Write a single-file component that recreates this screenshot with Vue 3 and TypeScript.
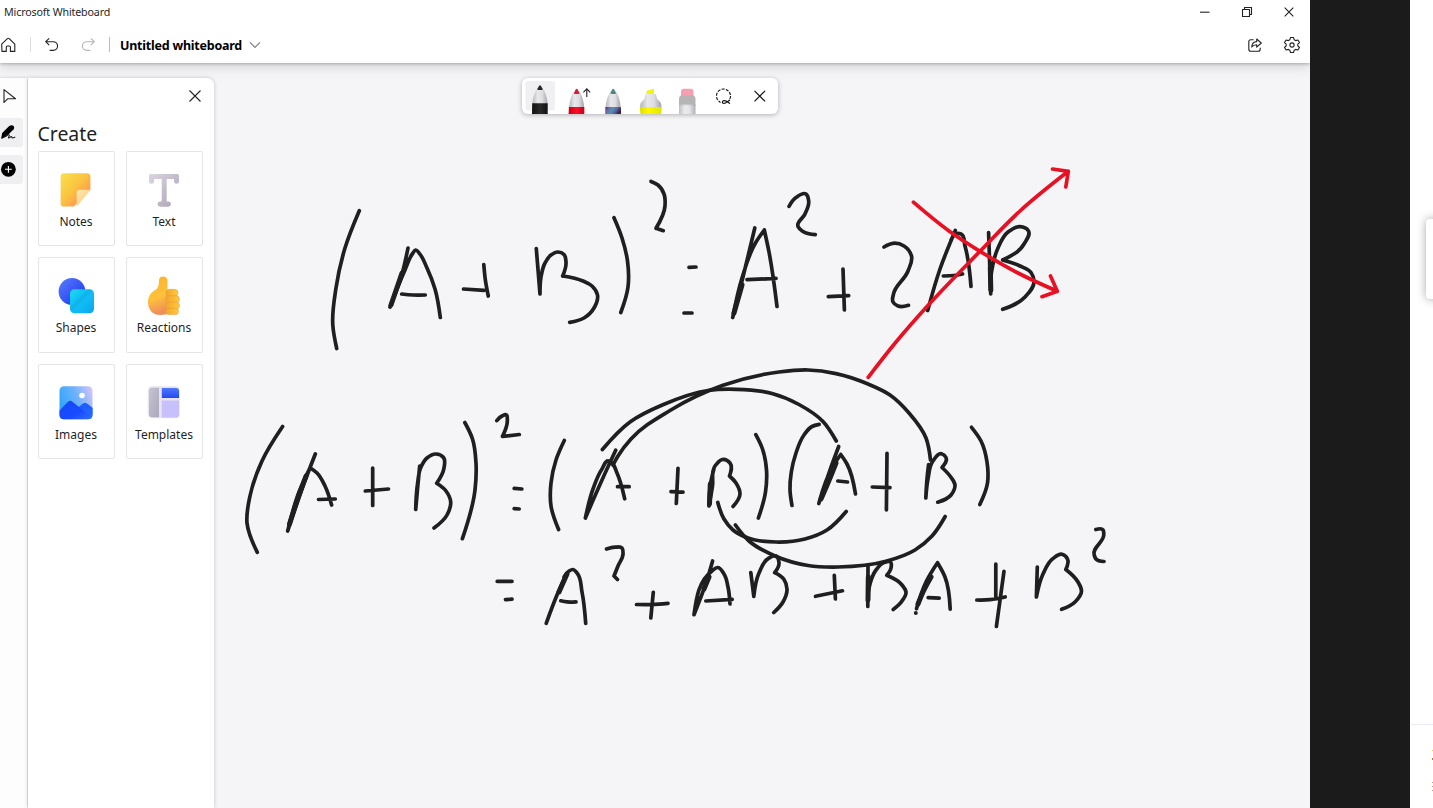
<script setup lang="ts">
interface Card {
  id: string
  label: string
}

const cards: Card[] = [
  { id: 'notes', label: 'Notes' },
  { id: 'text', label: 'Text' },
  { id: 'shapes', label: 'Shapes' },
  { id: 'reactions', label: 'Reactions' },
  { id: 'images', label: 'Images' },
  { id: 'templates', label: 'Templates' },
]

type Point = [number, number]

const distance = (p: Point, q: Point): number => Math.hypot(q[0] - p[0], q[1] - p[1]) || 1

// Unit tangent at b of the circle-like arc running a -> b -> c.
function tangent(a: Point, b: Point, c: Point): Point {
  const before = distance(a, b)
  const after = distance(b, c)
  const x = ((b[0] - a[0]) / before) * after + ((c[0] - b[0]) / after) * before
  const y = ((b[1] - a[1]) / before) * after + ((c[1] - b[1]) / after) * before
  const len = Math.hypot(x, y) || 1
  return [x / len, y / len]
}

function segmentPath(pts: Point[]): string {
  const last = pts.length - 1
  let d = `M${pts[0][0]} ${pts[0][1]}`
  if (last === 1) return `${d}L${pts[1][0]} ${pts[1][1]}`
  for (let i = 0; i < last; i++) {
    const b = pts[i]
    const c = pts[i + 1]
    const reach = distance(b, c) * 0.35
    let h1: Point = b
    let h2: Point = c
    if (i > 0) {
      const t = tangent(pts[i - 1], b, c)
      h1 = [b[0] + t[0] * reach, b[1] + t[1] * reach]
    }
    if (i + 1 < last) {
      const t = tangent(b, c, pts[i + 2])
      h2 = [c[0] - t[0] * reach, c[1] - t[1] * reach]
    }
    if (i === 0) h1 = [(b[0] + h2[0]) / 2, (b[1] + h2[1]) / 2]
    if (i + 1 === last) h2 = [(c[0] + h1[0]) / 2, (c[1] + h1[1]) / 2]
    d += `C${h1[0]} ${h1[1]} ${h2[0]} ${h2[1]} ${c[0]} ${c[1]}`
  }
  return d
}

// Smooth curve through the points; "|" separates segments that meet at a corner.
function toPath(source: string): string {
  return source
    .split('|')
    .map((segment) => segmentPath(segment.trim().split(/\s+/).map((p) => p.split(',').map(Number) as Point)))
    .join('')
}

const ink: string[] = [
  // first line
  '359.3,210.7 345,248 336,288 332.8,325 336.7,348.5',
  '408,248 402,274 390,307 | 390,307 405,270 413,253 415.7,250 419,253 427,268 435,289 440.3,317.5 | 401.7,294 413,295 425.3,295',
  '463.5,289 484,290.3 | 483.8,264.7 485.5,281 488.3,296',
  '536.3,248.7 540,294 | 540,294 541,277 545,263 551,255 558,252 564,254.5 566,262 562.7,276 | 562.7,276 583,281 592,286 597.5,295 594,308 584,318 569.7,322.3',
  '614,217.7 622,238 627.5,261 628,287 620.8,312.5',
  '651,181.5 658,185 664,194 665,206 656,228.3 | 656,228.3 663.3,230.7',
  '689,267.4 696,267 | 684,313 692,313',
  '754.8,228 743,277 732.7,317.5 | 732.7,317.5 742,278 756,242 764.3,230 | 764.3,230 769,252 777,306.5 | 747,279.7 776,278.4',
  '789,206.3 796,197.5 806,194 808.7,201 805,214 798,226.5 803,231.5 815.3,234.6',
  '828.3,296.6 848.7,295.7 | 843,269 844.4,310',
  '884,247 893,243.3 904,246 911.5,256 908,271 893.5,294 893,302 898,306 908.5,305.3',
  '955.3,230.5 940,269 927.7,310.5 | 951,240 957,233.5 961,234 965,246 971,286.5 | 943.3,276 954,275.5 962.5,274',
  '988.6,232.5 990.7,294 | 990.7,294 991.5,272 998,248 1008,232 1020,226.7 1028.2,230.5 1024,244 1002.7,260 | 1002.7,260 1020,266 1031,272.5 1034,281 1025,297 1002.7,309.3',
  // second line
  '282.6,426.5 262,461 250,496 247,523 257.3,552.3',
  '315.3,454 302,489 287.7,531 | 287.7,531 299,492 310,467.7 | 310,467.7 317,473 325,486 331.6,505 | 318.5,499.5 335.3,499',
  '365.3,491 388.5,489 | 372.7,468 372.7,505.5',
  '419.7,466 417.5,489 415.7,509.5 | 415.7,509.5 417.5,484 421,467 427,458 436,454 443.5,457.5 444,468 436.7,483.3 | 436.7,483.3 446,491 450.7,502 447,515 434,528',
  '464.8,422.5 472.5,439 476,463 475,490 462.4,538.7',
  '496.8,420.6 502,416 506.5,415 507.3,419 502.5,436.4 | 502.5,436.4 519.3,434.5',
  '514.2,488.3 521.8,489 | 514.2,508.7 519.2,509',
  '564.3,440.5 556,460 551,483 551,506 558.6,529.5',
  '615.7,450.3 602,480 585.4,518 | 585.4,518 593,489 602,469 608.5,461 611.5,462.5 617,473 624.7,498.8 | 617.5,486.7 629.2,486.7',
  '671,491.7 683,492.2 | 678,468.3 676.3,503.5',
  '714,468.5 710.5,484 709,506 | 709,506 712.5,486 715,466 723.5,459.3 730,463 729.5,476 | 729.5,476 736,483 740,494 733,506.5',
  '755.8,434.7 762.5,449 766.5,470 765.5,492 758.4,518',
  '819.2,424.4 812,426.5 804,435 796,453 791.3,472 790,490 792,505.5',
  '838.7,446.5 830,470 818.8,503.5 | 818.8,503.5 833,466 840.8,454.5 | 840.8,454.5 847,464 855.5,494 | 837.8,481 847.5,482',
  '872.3,487 890,487.7 | 887,453.3 886.4,510',
  '928.6,464.5 927,479 925.8,498 | 925.8,498 928,479 933,461 941.5,453.8 946,457.5 942,467.5 | 942,467.5 950,476 955,485 951,495 937.7,502.2',
  '971.5,427.3 981,441 987,462 987.5,483 979.8,504.5',
  // connecting arcs
  '602.4,449.5 630,422 663.5,404.5 708,390.5 736,389.3 772,393.5 799,404.5 823,421.5 836.3,441',
  '613,465 618,456 631,439 670,410.5 723,385.3 779,372 808,370 836,373.6 868,384 890,395 909,413 926,438 930.5,460',
  '717.8,502.5 724,519 733,530 748,538 776,542 805,539 827,530 846.2,511.5',
  '735.4,525 749,541 775,556 808,565.5 838,567 886,561.3 915,550 932,536 945.2,516.5',
  // third line
  '497.2,581.3 512,581.3 | 505.5,599.7 512,599.2',
  '566.5,573.5 557,595 546.2,623.3 | 564,577 569,571 573,569.5 577,573 582,592 585.7,623.3 | 560.8,600.8 567,601.9 576,601.8',
  '606.5,549 615,547.2 622,548 623,554 618,566 614,576 | 614,576 617.5,579.5',
  '636.5,604.5 652,604.5 668,603.3 | 653.3,592.3 650.8,618',
  '712.6,561 706,583 694,614.7 | 694,614.7 712,571 717.5,567.5 724,574 728,587 730,604 | 705.8,601 732.2,599.4',
  '750.8,572.5 753.8,596.3 | 753.8,596.3 759,573 769,558 776,556 779,562.5 774.7,572.7 | 774.7,572.7 784,579.5 787,589 783,602 773.8,612.5',
  '815.5,596.3 842.5,590.8 | 834.3,575.3 835.4,599',
  '868,565 867.8,606.5 | 867.8,606.5 869,588 876,570 884,562.5 890.5,562 891,568 886.8,575.3 | 886.8,575.3 902,585 906,592 902,601 893.2,609.5',
  '916.5,608.7 926,582 937.5,562.8 | 937.5,562.8 945,577 950.2,609.2 | 928.2,597.7 939.2,598.2',
  '976.8,600 990,599.7 1005.2,597 | 995.8,564 995.8,596.5 | 1004,571.3 996.4,626.5',
  '1037.3,567 1036.4,597 | 1036.4,597 1043,574 1053,558.5 1062,554.3 1067.5,559 1065.8,569.5 | 1065.8,569.5 1078,582 1081.5,591 1075,602 1061.6,609.3',
  '1095.8,529.5 1103,529.8 1103.8,534 1094.2,555 1096,559 1104,561.5',
]

const heavy: string[] = [
  '402,273 391,305',
  '742,285 734,313',
  '306,476 298,498 289.5,524',
  '567,574 559,592',
  '710.3,484 709.5,504',
  '836,463 830,478 821,499',
  '931,577 924,590 918,604',
  '709,577 704,589',
  '990.3,268 990.8,290',
  '868.3,577 868,600',
]

const crossOut: string[] = [
  '868.2,377.3 896,342 927,306.5 980,251.3 1020,211 1068.3,171.3 | 1052.5,169 1068.3,171.3 | 1068.3,171.3 1065.8,187',
  '913.4,202.2 949,231 980,251.3 1018,273 1057.3,291.3 | 1050.5,276 1057.3,291.3 | 1057.3,291.3 1042,296.7',
]
</script>

<template>
  <div class="screen">
    <main class="window">
      <header class="head">
        <div class="titlebar">
          <span class="app-name">Microsoft Whiteboard</span>
          <div class="controls">
            <svg width="12" height="12" viewBox="0 0 12 12"><path d="M1 6.2h9.5" /></svg>
            <svg width="12" height="12" viewBox="0 0 12 12"><path d="M1.5 3.5h7v7h-7zM3.5 3.3V1.5h7v7H8.7" /></svg>
            <svg width="12" height="12" viewBox="0 0 12 12"><path d="M1.7 1.7l8.6 8.6M10.3 1.7L1.7 10.3" /></svg>
          </div>
        </div>
        <div class="toolbar">
          <svg class="home" width="16" height="16" viewBox="0 0 16 16"><path d="M1.7 7.2L7.4 1.6q.9-.8 1.8 0L14.8 7.2v7.2H10.4V10q0-1-1-1H7.3q-1 0-1 1v4.4H2z" /></svg>
          <i class="bar light" />
          <svg class="undo" width="16" height="16" viewBox="0 0 16 16"><path d="M6.2 1.3L2.7 4.7l3.5 3.5M3 4.700h7.200a4.300 4.300 0 0 1 0 8.700H6.700" /></svg>
          <svg class="redo" width="16" height="16" viewBox="0 0 16 16"><path d="M10.800 1.300l3.500 3.400-3.500 3.500M14 4.700H6.800a4.300 4.300 0 0 0 0 8.700h3.500" /></svg>
          <i class="bar" />
          <strong class="doc">Untitled whiteboard</strong>
          <svg class="chev" width="12" height="8" viewBox="0 0 12 8"><path d="M1 1.3l5 5 5-5" /></svg>
          <span class="grow" />
          <svg class="share" width="16" height="16" viewBox="0 0 16 16"><path d="M6.5 2.8H3.8Q1.8 2.8 1.8 4.8v7.4q0 2 2 2h7.4q2 0 2-2V10.7M9.7 2v2.6C6.5 4.7 5 6.5 4.7 10 6 8.3 7.4 7.7 9.7 7.7v2.5L14.3 6z" /></svg>
          <svg class="gear" width="18" height="18" viewBox="0 0 18 18"><path d="M7.5 1.5h3l.6 2.2 1.6.9 2.2-.6 1.6 2.6-1.7 1.5v1.8l1.7 1.6-1.6 2.5-2.2-.6-1.6.9-.6 2.2h-3l-.6-2.2-1.6-.9-2.2.6-1.6-2.5 1.7-1.6V8.1L1.5 6.6 3.1 4l2.2.6 1.6-.9z" /><circle cx="9" cy="9" r="2.1" /></svg>
        </div>
      </header>

      <section class="board">
        <svg class="ink" viewBox="0 63 1310 745" width="1310" height="745">
          <path v-for="s in ink" :key="s" :d="toPath(s)" />
          <path v-for="s in heavy" :key="s" class="heavy" :d="toPath(s)" />
          <circle cx="915.8" cy="613" r="2" />
          <path v-for="s in crossOut" :key="s" class="red" :d="toPath(s)" />
        </svg>

        <div class="side">
          <nav class="rail">
            <span class="tool"><svg width="24" height="28" viewBox="0 0 24 28"><path class="line" d="M4 7.6v12.8l3.6-3.6H15.5z" /></svg></span>
            <span class="tool active"><svg width="24" height="28" viewBox="0 0 24 28"><path d="M1.2 20.3l1-5.2 6.5-6.5q2.2-1.9 4.2-1 2 1.2.8 3.6l-7 7.1-4.3 2.1z" /><path class="line" d="M1.3 20.2c4-1 6-3.8 7.6-3.5 1.4.5-1.4 3.2 0 3.3 1.1 0 1.4-1.5 2.3-1.4.8.2.5 1.3 1.5 1.3 1 0 1.4-.6 2.5-.8" /></svg></span>
            <span class="tool active"><svg width="24" height="28" viewBox="0 0 24 28"><circle cx="8.4" cy="14.3" r="7.4" /><path class="plus" d="M8.4 10.900v6.800M5 14.300h6.800" /></svg></span>
          </nav>

          <aside class="panel">
            <svg class="close" width="14" height="14" viewBox="0 0 14 14"><path d="M1.5 1.5l11 11M12.5 1.5l-11 11" /></svg>
            <h1>Create</h1>
            <div class="cards">
              <div v-for="card in cards" :key="card.id" class="card">
                <svg v-if="card.id === 'notes'" width="40" height="40" viewBox="0 0 40 40">
                  <defs>
                    <linearGradient id="note" x1="0" y1="0" x2="1" y2="1"><stop offset="0" stop-color="#f8e04c" /><stop offset=".45" stop-color="#fbc440" /><stop offset=".75" stop-color="#ff9a50" /></linearGradient>
                    <linearGradient id="fold" x1="0" y1="0" x2="1" y2="1"><stop offset="0" stop-color="#ffe9b5" /><stop offset="1" stop-color="#fdc66d" /></linearGradient>
                  </defs>
                  <g transform="translate(1 0)">
                    <path fill="url(#note)" d="M7 3.3h23q3.4 0 3.4 3.4V20L17 36.6H7q-3.4 0-3.4-3.4V6.7Q3.6 3.3 7 3.3z" />
                    <path fill="url(#fold)" d="M23 19.7h10.4L20 36.6h-.3V23q0-3.3 3.3-3.3z" />
                  </g>
                </svg>
                <svg v-else-if="card.id === 'text'" width="40" height="40" viewBox="0 0 40 40">
                  <defs><linearGradient id="serif" x1="0" y1="0" x2="1" y2="1"><stop offset="0" stop-color="#dad6e1" /><stop offset="1" stop-color="#ada2b5" /></linearGradient></defs>
                  <path fill="url(#serif)" d="M6.5 4H33.5q1.5 0 1.5 1.6V11.5q-.2 2.3-2.5 2.3T30 11.5V9H22.7V31.5H24.5q2.5.2 2.5 2.6T24.5 36.7H16q-2.5-.2-2.5-2.6t2.5-2.6h1.7V9H10v2.5q-.2 2.3-2.5 2.3T5 11.5V5.6Q5 4 6.5 4z" />
                </svg>
                <svg v-else-if="card.id === 'shapes'" width="40" height="40" viewBox="0 0 40 40">
                  <defs>
                    <linearGradient id="disc" x1="0" y1="0" x2="1" y2="1"><stop offset="0" stop-color="#5a7dfc" /><stop offset="1" stop-color="#1631ef" /></linearGradient>
                    <linearGradient id="tile" x1="0" y1="0" x2="1" y2="1"><stop offset="0" stop-color="#20dafa" /><stop offset=".34" stop-color="#0fc4f1" /><stop offset=".42" stop-color="#12b0e8" /><stop offset=".54" stop-color="#11bdf5" /><stop offset="1" stop-color="#0ba4ed" /></linearGradient>
                  </defs>
                  <circle cx="16" cy="15.5" r="13.4" fill="url(#disc)" />
                  <rect x="14" y="13.2" width="24" height="24" rx="4.5" fill="url(#tile)" />
                </svg>
                <svg v-else-if="card.id === 'reactions'" width="40" height="40" viewBox="0 0 40 40">
                  <defs><linearGradient id="palm" x1="0" y1="0" x2=".2" y2="1"><stop offset="0" stop-color="#f9b32b" /><stop offset=".6" stop-color="#ffc13b" /><stop offset="1" stop-color="#ef8f5d" /></linearGradient><linearGradient id="finger"><stop offset="0" stop-color="#f0a62e" /><stop offset="1" stop-color="#ffc83c" /></linearGradient></defs>
                  <path fill="url(#palm)" d="M15 4.5q0-4 4-4 4.500 0 4.500 4.500v11l2 1.500v19q-3 2.500-9.500 2.500C8 39 4 33 4 26c0-7 4-10 8-12.500Q15 11.500 15 4.500z" />
                  <g fill="url(#finger)" stroke="#e99a35" stroke-width=".5"><rect x="22" y="13.3" width="12" height="7.3" rx="3.5" /><rect x="21.5" y="19.7" width="14" height="7" rx="3.5" /><rect x="21.5" y="26" width="14" height="7" rx="3.5" /><rect x="21.5" y="32.2" width="13" height="6.4" rx="3.2" /></g>
                </svg>
                <svg v-else-if="card.id === 'images'" width="40" height="40" viewBox="0 0 40 40">
                  <defs><linearGradient id="sky" x1="0" y1=".4" x2="1" y2="0"><stop offset="0" stop-color="#35a7fb" /><stop offset=".5" stop-color="#71b2fb" /><stop offset="1" stop-color="#dfc6fa" /></linearGradient><linearGradient id="hill" x1="0" y1="0" x2="1" y2="1"><stop offset="0" stop-color="#174af3" /><stop offset=".6" stop-color="#164bff" /><stop offset="1" stop-color="#3470ff" /></linearGradient></defs>
                  <rect x="3.5" y="3.3" width="33" height="33" rx="4.5" fill="url(#sky)" />
                  <path fill="url(#hill)" d="M3.5 27.5L12 18.7q2.500-1.800 4.700.2L23 24l3.500-3q2.500-2 5 0l5 4v6.800q0 4.500-4.500 4.500H8q-4.500 0-4.500-4.500z" />
                  <path fill="#2668fb" opacity=".65" d="M23 24l12 10.500q1.500-2 1.500-3.500V25l-5-4q-2.500-2-5 0z" />
                  <circle cx="26" cy="12.5" r="2.8" fill="#fff" />
                </svg>
                <svg v-else width="40" height="40" viewBox="0 0 40 40">
                  <defs><linearGradient id="pane" x1="0" y1="0" x2="1" y2="1"><stop offset="0" stop-color="#c6c3d1" /><stop offset="1" stop-color="#aaa8ba" /></linearGradient><linearGradient id="top" x1="0" y1="0" x2="0" y2="1"><stop offset="0" stop-color="#5078ff" /><stop offset="1" stop-color="#244af0" /></linearGradient></defs>
                  <rect x="3.8" y="3.2" width="32" height="32" rx="4.5" fill="#e9e3f1" />
                  <path fill="url(#pane)" d="M8 4.7h7V34.3H8q-3-.2-3-3V7.7q0-3 3-3z" />
                  <path fill="url(#top)" d="M17.8 5h14.2q3 .2 3 3v7H17.8z" />
                  <path fill="#c7c1fb" d="M17.8 17.5H35V31.5q0 3-3 3H17.8z" />
                </svg>
                <span>{{ card.label }}</span>
              </div>
            </div>
          </aside>
        </div>

        <div class="pens">
          <svg width="256" height="36" viewBox="0 0 256 36">
            <defs>
              <linearGradient id="shell"><stop offset="0" stop-color="#b5b5b9" /><stop offset=".35" stop-color="#e8e8eb" /><stop offset=".65" stop-color="#dedee2" /><stop offset="1" stop-color="#a2a2a7" /></linearGradient>
              <linearGradient id="black"><stop offset="0" stop-color="#111" /><stop offset=".5" stop-color="#2a2a2a" /><stop offset="1" stop-color="#111" /></linearGradient>
              <linearGradient id="crimson"><stop offset="0" stop-color="#c40018" /><stop offset=".5" stop-color="#fb1029" /><stop offset="1" stop-color="#c60018" /></linearGradient>
              <linearGradient id="galaxy" x1="0" y1="0" x2="1" y2=".3"><stop offset="0" stop-color="#48226f" /><stop offset=".25" stop-color="#7760a8" /><stop offset=".5" stop-color="#479aaa" /><stop offset=".75" stop-color="#5f65a5" /><stop offset="1" stop-color="#3c234d" /></linearGradient>
              <linearGradient id="yellow"><stop offset="0" stop-color="#d9df00" /><stop offset=".4" stop-color="#fff800" /><stop offset="1" stop-color="#dfe500" /></linearGradient>
            </defs>
            <rect x="3.5" y="3" width="29.5" height="29.5" rx="3" fill="#f0eff2" />
            <path fill="url(#shell)" d="M10.2 27Q11 16 15.5 10h5Q25 16 25.7 27z" />
            <path fill="#262626" d="M15 11.5L17 8q1-1.7 2 0l2 3.5q-3 1-6 0z" />
            <path fill="url(#black)" d="M10.2 25.2h15.5V36H10z" />
            <path fill="url(#shell)" d="M47 30q.8-11 5.2-17h5Q61.5 19 62.2 30z" />
            <path fill="#d02038" d="M51.7 15.5l2-4q1-1.7 2 0l2 4q-3 1-6 0z" />
            <path fill="url(#crimson)" d="M46.9 29h15.4v7H46.600z" />
            <path fill="none" stroke="#222" stroke-width="1.1" d="M64.8 19v-8M61.4 14.3l3.4-3.4 3.4 3.4" />
            <path fill="url(#shell)" d="M83.5 30q.8-11 5.2-17h5q4.300 6 5 17z" />
            <path fill="#498889" d="M88.2 15.5l2-4q1-1.7 2 0l2 4q-3 1-6 0z" />
            <path fill="url(#galaxy)" d="M83.4 29h15.5l.2 7H83.2z" />
            <path fill="#f4f500" d="M124.5 16.5v-3.500l7.500-2.500V16.500z" />
            <path fill="url(#shell)" d="M123 18.5q.2-2.7 2.5-2.7h6.5q2.3 0 2.5 2.7.1 3 2.7 4.5 2.4 1.4 2.3 7h-21.5q-.1-5.6 2.4-7 2.500-1.500 2.600-4.500z" />
            <path fill="url(#yellow)" d="M117.7 29h22l-.5 7h-20.700z" />
            <rect x="159" y="10.7" width="12.5" height="9" rx="2.5" fill="#f5a0af" />
            <path fill="#b5b5b8" d="M157 21q0-3.8 3.5-3.8h9.5q3.5 0 3.5 3.8v7h-16.500z" />
            <path fill="url(#shell)" opacity=".85" d="M157 26.5h16.500V36H157z" />
            <circle cx="201.5" cy="18" r="7" fill="none" stroke="#111" stroke-width="1.1" stroke-dasharray="3.1 1.3" />
            <path d="M198.5 21.500h9v5h-9z" fill="#fff" />
            <path fill="none" stroke="#111" stroke-width="1.2" d="M208 25.5c-2-1.300-3.700-3-6-2.800-2.200.3-2.200 2.600 0 2.700 2.300 0 4-2.700 6-3.300" />
            <path fill="none" stroke="#111" stroke-width="1.2" d="M232.5 12.8l10.6 10.6M243.100 12.800l-10.600 10.600" />
          </svg>
        </div>
      </section>
    </main>
    <div class="gap" />
    <aside class="other">
      <div class="peek" />
      <div class="foot"><i class="speck gold" /><i class="speck dark" /><i class="speck tan first" /><i class="speck tan" /><i class="speck tan" /></div>
    </aside>
  </div>
</template>

<style scoped>
.screen {
  width: 1433px;
  height: 808px;
  overflow: hidden;
  display: grid;
  grid-template-columns: 1310px 100px 23px;
  font-family: "Noto Sans", "Open Sans", sans-serif;
  color: #1f1f1f;
}
.window {
  height: 808px;
  overflow: hidden;
  display: flex;
  flex-direction: column;
  background: #f5f5f8;
}
.head {
  position: relative;
  z-index: 1;
  height: 63px;
  background: #fff;
  box-shadow: 0 1px 3px rgba(0, 0, 0, .25), 0 4px 12px rgba(0, 0, 0, .13);
}
.titlebar {
  height: 24px;
  padding: 0 15px 0 4px;
  display: flex;
  align-items: center;
  justify-content: space-between;
}
.app-name {
  font-size: 10.7px;
  letter-spacing: -0.15px;
  white-space: nowrap;
}
.controls {
  display: flex;
  gap: 30px;
}
.controls svg,
.toolbar svg {
  flex: none;
  fill: none;
  stroke: #222;
  stroke-width: 1.1;
  stroke-linejoin: round;
}
.toolbar {
  height: 39px;
  padding-top: 2px;
  box-sizing: border-box;
  display: flex;
  align-items: center;
}
.bar {
  width: 1px;
  height: 15px;
  margin-left: 14px;
  background: #bcbcbc;
}
.bar.light {
  background: #ddd;
}
.undo {
  margin-left: 12px;
}
.toolbar .redo {
  margin-left: 21px;
  stroke: #b5b5b5;
}
.toolbar .redo + .bar {
  margin-left: 13px;
}
.doc {
  margin-left: 10px;
  padding-top: 1px;
  font-size: 12.5px;
  letter-spacing: -0.23px;
  color: #000;
  width: 122px;
  white-space: nowrap;
}
.toolbar .chev {
  margin-left: 7px;
  stroke: #777;
}
.grow {
  flex: 1;
}
.gear {
  margin: 0 9px 0 20px;
}
.board {
  position: relative;
  flex: 1;
  padding-top: 15px;
}
.ink {
  position: absolute;
  inset: 0;
  fill: none;
  stroke: #1f1f1f;
  stroke-width: 3.7;
  stroke-linecap: round;
  stroke-linejoin: round;
}
.ink .heavy {
  stroke-width: 5;
}
.ink .red {
  stroke: #e81123;
}
.ink circle {
  fill: #1f1f1f;
  stroke: none;
}
.side {
  position: relative;
  display: flex;
  height: 730px;
}
.rail {
  width: 27px;
  background: #fdfdfd;
  padding-top: 3.5px;
  box-sizing: border-box;
  display: flex;
  flex-direction: column;
  gap: 7.8px;
  box-shadow: 0 0 3px rgba(0, 0, 0, .2);
}
.tool {
  width: 23px;
  height: 29px;
  border-radius: 0 3px 3px 0;
}
.tool svg {
  display: block;
}
.tool.active {
  background: #efeef1;
}
.tool .line {
  fill: none;
  stroke: #222;
  stroke-width: 1.1;
  stroke-linejoin: round;
}
.tool .plus {
  stroke: #fff;
  stroke-width: 1.1;
}
.panel {
  width: 186px;
  box-sizing: border-box;
  margin-left: .5px;
  padding: 11px 10px 0;
  display: flex;
  flex-direction: column;
  background: #fff;
  border-radius: 0 7px 0 0;
  box-shadow: 0 0 4px rgba(0, 0, 0, .2);
}
.close {
  align-self: flex-end;
  stroke: #222;
  stroke-width: 1.1;
  margin-right: 2px;
}
.panel h1 {
  margin: 16px 0 0;
  font-size: 19.4px;
  line-height: 30px;
  font-weight: 400;
  height: 32px;
}
.cards {
  display: grid;
  grid-template-columns: 77px 77px;
  grid-auto-rows: 95.3px;
  gap: 11px;
}
.card {
  box-sizing: border-box;
  border: 1px solid #e5e5e7;
  border-radius: 2px;
  padding-top: 18px;
  display: flex;
  flex-direction: column;
  align-items: center;
}
.card svg {
  margin-left: -1px;
}
.card span {
  font-size: 12px;
  line-height: 16px;
  margin-top: 4px;
}
.pens {
  position: absolute;
  left: 522px;
  top: 15px;
  width: 256px;
  height: 36px;
  border-radius: 6px;
  background: #fff;
  box-shadow: 0 1px 5px rgba(0, 0, 0, .28);
}
.pens svg {
  display: block;
}
.gap {
  background: #1b1b1b;
}
.other {
  background: #fff;
  overflow: hidden;
  display: flex;
  flex-direction: column;
  justify-content: space-between;
}
.peek {
  width: 30px;
  height: 80px;
  margin: 219px 0 0 16px;
  border-radius: 4px;
  background: #fff;
  box-shadow: 0 0 10px rgba(0, 0, 0, .35);
}
.foot {
  height: 84px;
  box-sizing: border-box;
  margin-left: 1px;
  padding-top: 25px;
  border-top: 1px solid #ebebf5;
  display: flex;
  flex-direction: column;
  align-items: flex-end;
}
.speck {
  width: 1px;
  height: 1px;
  margin-bottom: 3px;
}
.speck.gold {
  background: #f3cf55;
  margin-bottom: 7px;
}
.speck.dark {
  height: 2px;
  background: #a8803a;
}
.speck.tan {
  background: #c39a8c;
}
.speck.first {
  margin-top: 19px;
}
</style>

<style>
body {
  margin: 0;
  overflow: hidden;
}
</style>
